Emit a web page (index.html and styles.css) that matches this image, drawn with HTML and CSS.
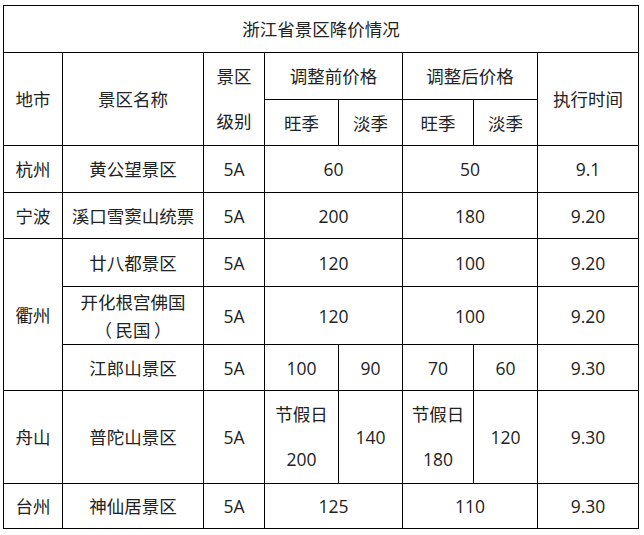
FILE: index.html
```html
<!DOCTYPE html>
<html lang="zh">
<head>
<meta charset="utf-8">
<link rel="stylesheet" href="styles.css">
</head>
<body>
<table class="price-table">
  <colgroup>
    <col class="c-city"><col class="c-name"><col class="c-level"><col class="c-p1"><col class="c-p2"><col class="c-p3"><col class="c-p4"><col class="c-time">
  </colgroup>
  <tr class="r-title"><td colspan="8">浙江省景区降价情况</td></tr>
  <tr class="r-h1">
    <td rowspan="2">地市</td>
    <td rowspan="2">景区名称</td>
    <td rowspan="2" class="two-line">景区<br>级别</td>
    <td colspan="2">调整前价格</td>
    <td colspan="2">调整后价格</td>
    <td rowspan="2">执行时间</td>
  </tr>
  <tr class="r-h2"><td>旺季</td><td>淡季</td><td>旺季</td><td>淡季</td></tr>
  <tr class="r-a"><td>杭州</td><td>黄公望景区</td><td>5A</td><td colspan="2">60</td><td colspan="2">50</td><td>9.1</td></tr>
  <tr class="r-b"><td>宁波</td><td>溪口雪窦山统票</td><td>5A</td><td colspan="2">200</td><td colspan="2">180</td><td>9.20</td></tr>
  <tr class="r-c"><td rowspan="3">衢州</td><td>廿八都景区</td><td>5A</td><td colspan="2">120</td><td colspan="2">100</td><td>9.20</td></tr>
  <tr class="r-d"><td class="wrap">开化根宫佛国<br><span class="paren">（</span>民国<span class="paren">）</span></td><td>5A</td><td colspan="2">120</td><td colspan="2">100</td><td>9.20</td></tr>
  <tr class="r-e"><td>江郎山景区</td><td>5A</td><td>100</td><td>90</td><td>70</td><td>60</td><td>9.30</td></tr>
  <tr class="r-f"><td>舟山</td><td>普陀山景区</td><td>5A</td><td class="two-line">节假日<br>200</td><td>140</td><td class="two-line">节假日<br>180</td><td>120</td><td>9.30</td></tr>
  <tr class="r-g"><td>台州</td><td>神仙居景区</td><td>5A</td><td colspan="2">125</td><td colspan="2">110</td><td>9.30</td></tr>
</table>
</body>
</html>
```
FILE: styles.css
```css
html, body {
  margin: 0;
  padding: 0;
  background: #fff;
}
body {
  padding: 5px 0 0 3px;
  font-family: "Open Sans", "Noto Sans CJK SC", sans-serif;
  font-size: 17.5px;
  color: #222;
}
.price-table {
  border-collapse: collapse;
  table-layout: fixed;
  width: 635px;
}
.price-table td {
  border: 1px solid #000;
  padding: 0;
  text-align: center;
  vertical-align: middle;
  line-height: 24px;
  white-space: nowrap;
}
.c-city { width: 59px; }
.c-name { width: 141px; }
.c-level { width: 61px; }
.c-p1 { width: 74px; }
.c-p2 { width: 64px; }
.c-p3 { width: 71px; }
.c-p4 { width: 64px; }
.c-time { width: 101px; }
.r-title { height: 47px; }
.r-h1 { height: 47px; }
.r-h2 { height: 46px; }
.r-a { height: 47px; }
.r-b { height: 46px; }
.r-c { height: 48px; }
.r-d { height: 58px; }
.r-e { height: 46px; }
.r-f { height: 93px; }
.r-g { height: 45px; }
.price-table td.two-line { line-height: 45px; }
.price-table td.wrap { line-height: 28px; }
.paren {
  display: inline-block;
  width: 1.4em;
  text-align: center;
}
```
